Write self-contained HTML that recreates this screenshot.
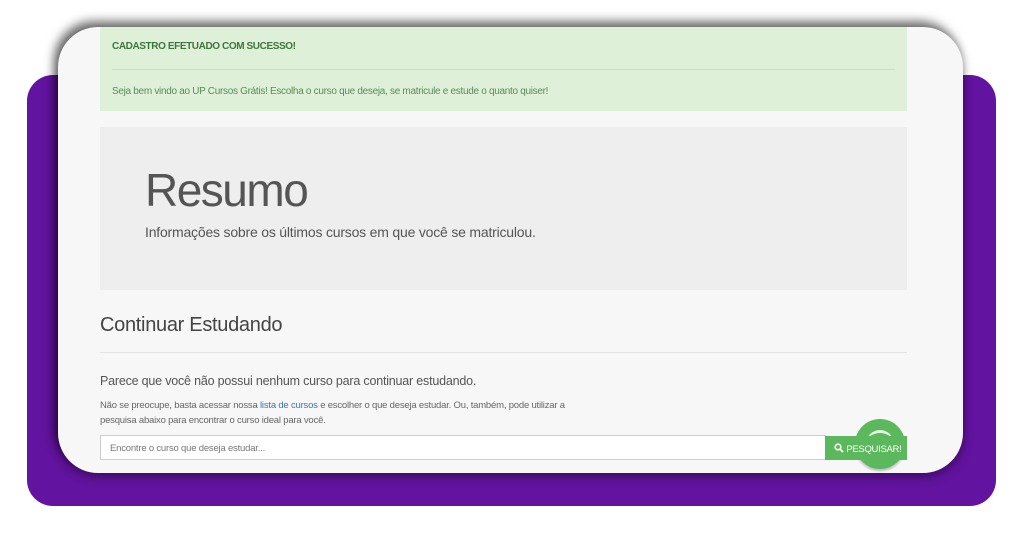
<!DOCTYPE html>
<html><head><meta charset="utf-8"><style>
*{margin:0;padding:0;box-sizing:border-box}
body{width:1024px;height:536px;background:#fff;position:relative;overflow:hidden;font-family:"Liberation Sans",sans-serif;color:#333}
.purple{position:absolute;left:27px;top:75px;width:969px;height:431px;background:#62139f;border-radius:26px}
.card{position:absolute;left:58px;top:27px;width:905px;height:446px;background:#f7f7f7;border-radius:40px;box-shadow:-4px -6px 10px rgba(0,0,0,.55),0 4px 10px rgba(0,0,0,.35);overflow:hidden}
.alert{position:absolute;left:42px;top:0;width:807px;height:84px;background:#dff0d8;color:#3c763d}
.alert .t{position:absolute;left:12px;top:14px;font-size:10px;font-weight:bold;letter-spacing:-.4px}
.alert hr{position:absolute;left:12px;right:12px;top:42px;border:0;border-top:1px solid #c9e2bd}
.alert .m{position:absolute;left:12px;top:59px;font-size:10px;letter-spacing:-.3px;color:#5b8a5c}
.jumbo{position:absolute;left:42px;top:100px;width:807px;height:163px;background:#eee}
.jumbo h1{position:absolute;left:45px;top:36px;font-size:46px;font-weight:normal;letter-spacing:-1.5px;color:#555}
.jumbo p{position:absolute;left:45px;top:97px;font-size:14px;letter-spacing:-.2px;color:#555}
h2{position:absolute;left:42px;top:287px;font-size:20px;font-weight:normal;color:#444;letter-spacing:-.3px}
.line{position:absolute;left:42px;width:807px;top:325px;border-top:1px solid #e3e3e3}
.p1{position:absolute;left:42px;top:347px;font-size:12.5px;color:#555;letter-spacing:-.2px}
.p2{position:absolute;left:42px;top:371px;font-size:9.5px;line-height:15px;color:#666;letter-spacing:-.2px;width:480px}
.p2 a{color:#337ab7;text-decoration:none}
.input{position:absolute;left:42px;top:408px;width:726px;height:25px;background:#fff;border:1px solid #ccc;font-size:9.5px;color:#777;padding:7px 9px;letter-spacing:-.2px}
.circle{position:absolute;left:797px;top:392px;width:50px;height:50px;border-radius:50%;background:#5cb85c;box-shadow:0 2px 2px rgba(0,0,0,.25)}
.arc{position:absolute;left:808px;top:403px;width:28px;height:28px;border-radius:50%;border-top:3px solid #e8f4e8}
.btn{position:absolute;left:767px;top:409px;width:82px;height:24px;background:#5cb85c;color:#fff;font-size:9.5px;padding:7px 0 0 9px;letter-spacing:-.3px}
</style></head><body>
<div class="purple"></div>
<div class="card">
<div class="alert"><div class="t">CADASTRO EFETUADO COM SUCESSO!</div><hr><div class="m">Seja bem vindo ao UP Cursos Grátis! Escolha o curso que deseja, se matricule e estude o quanto quiser!</div></div>
<div class="jumbo"><h1>Resumo</h1><p>Informações sobre os últimos cursos em que você se matriculou.</p></div>
<h2>Continuar Estudando</h2>
<div class="line"></div>
<div class="p1">Parece que você não possui nenhum curso para continuar estudando.</div>
<div class="p2">Não se preocupe, basta acessar nossa <a>lista de cursos</a> e escolher o que deseja estudar. Ou, também, pode utilizar a pesquisa abaixo para encontrar o curso ideal para você.</div>
<div class="input">Encontre o curso que deseja estudar...</div>
<div class="circle"></div>
<div class="arc"></div>
<div class="btn"><svg width="10" height="10" viewBox="0 0 10 10" style="vertical-align:-1px"><circle cx="4" cy="4" r="2.8" stroke="#fff" stroke-width="1.6" fill="none"/><path d="M6 6L9 9" stroke="#fff" stroke-width="1.8"/></svg> PESQUISAR!</div>
</div>
</body></html>
